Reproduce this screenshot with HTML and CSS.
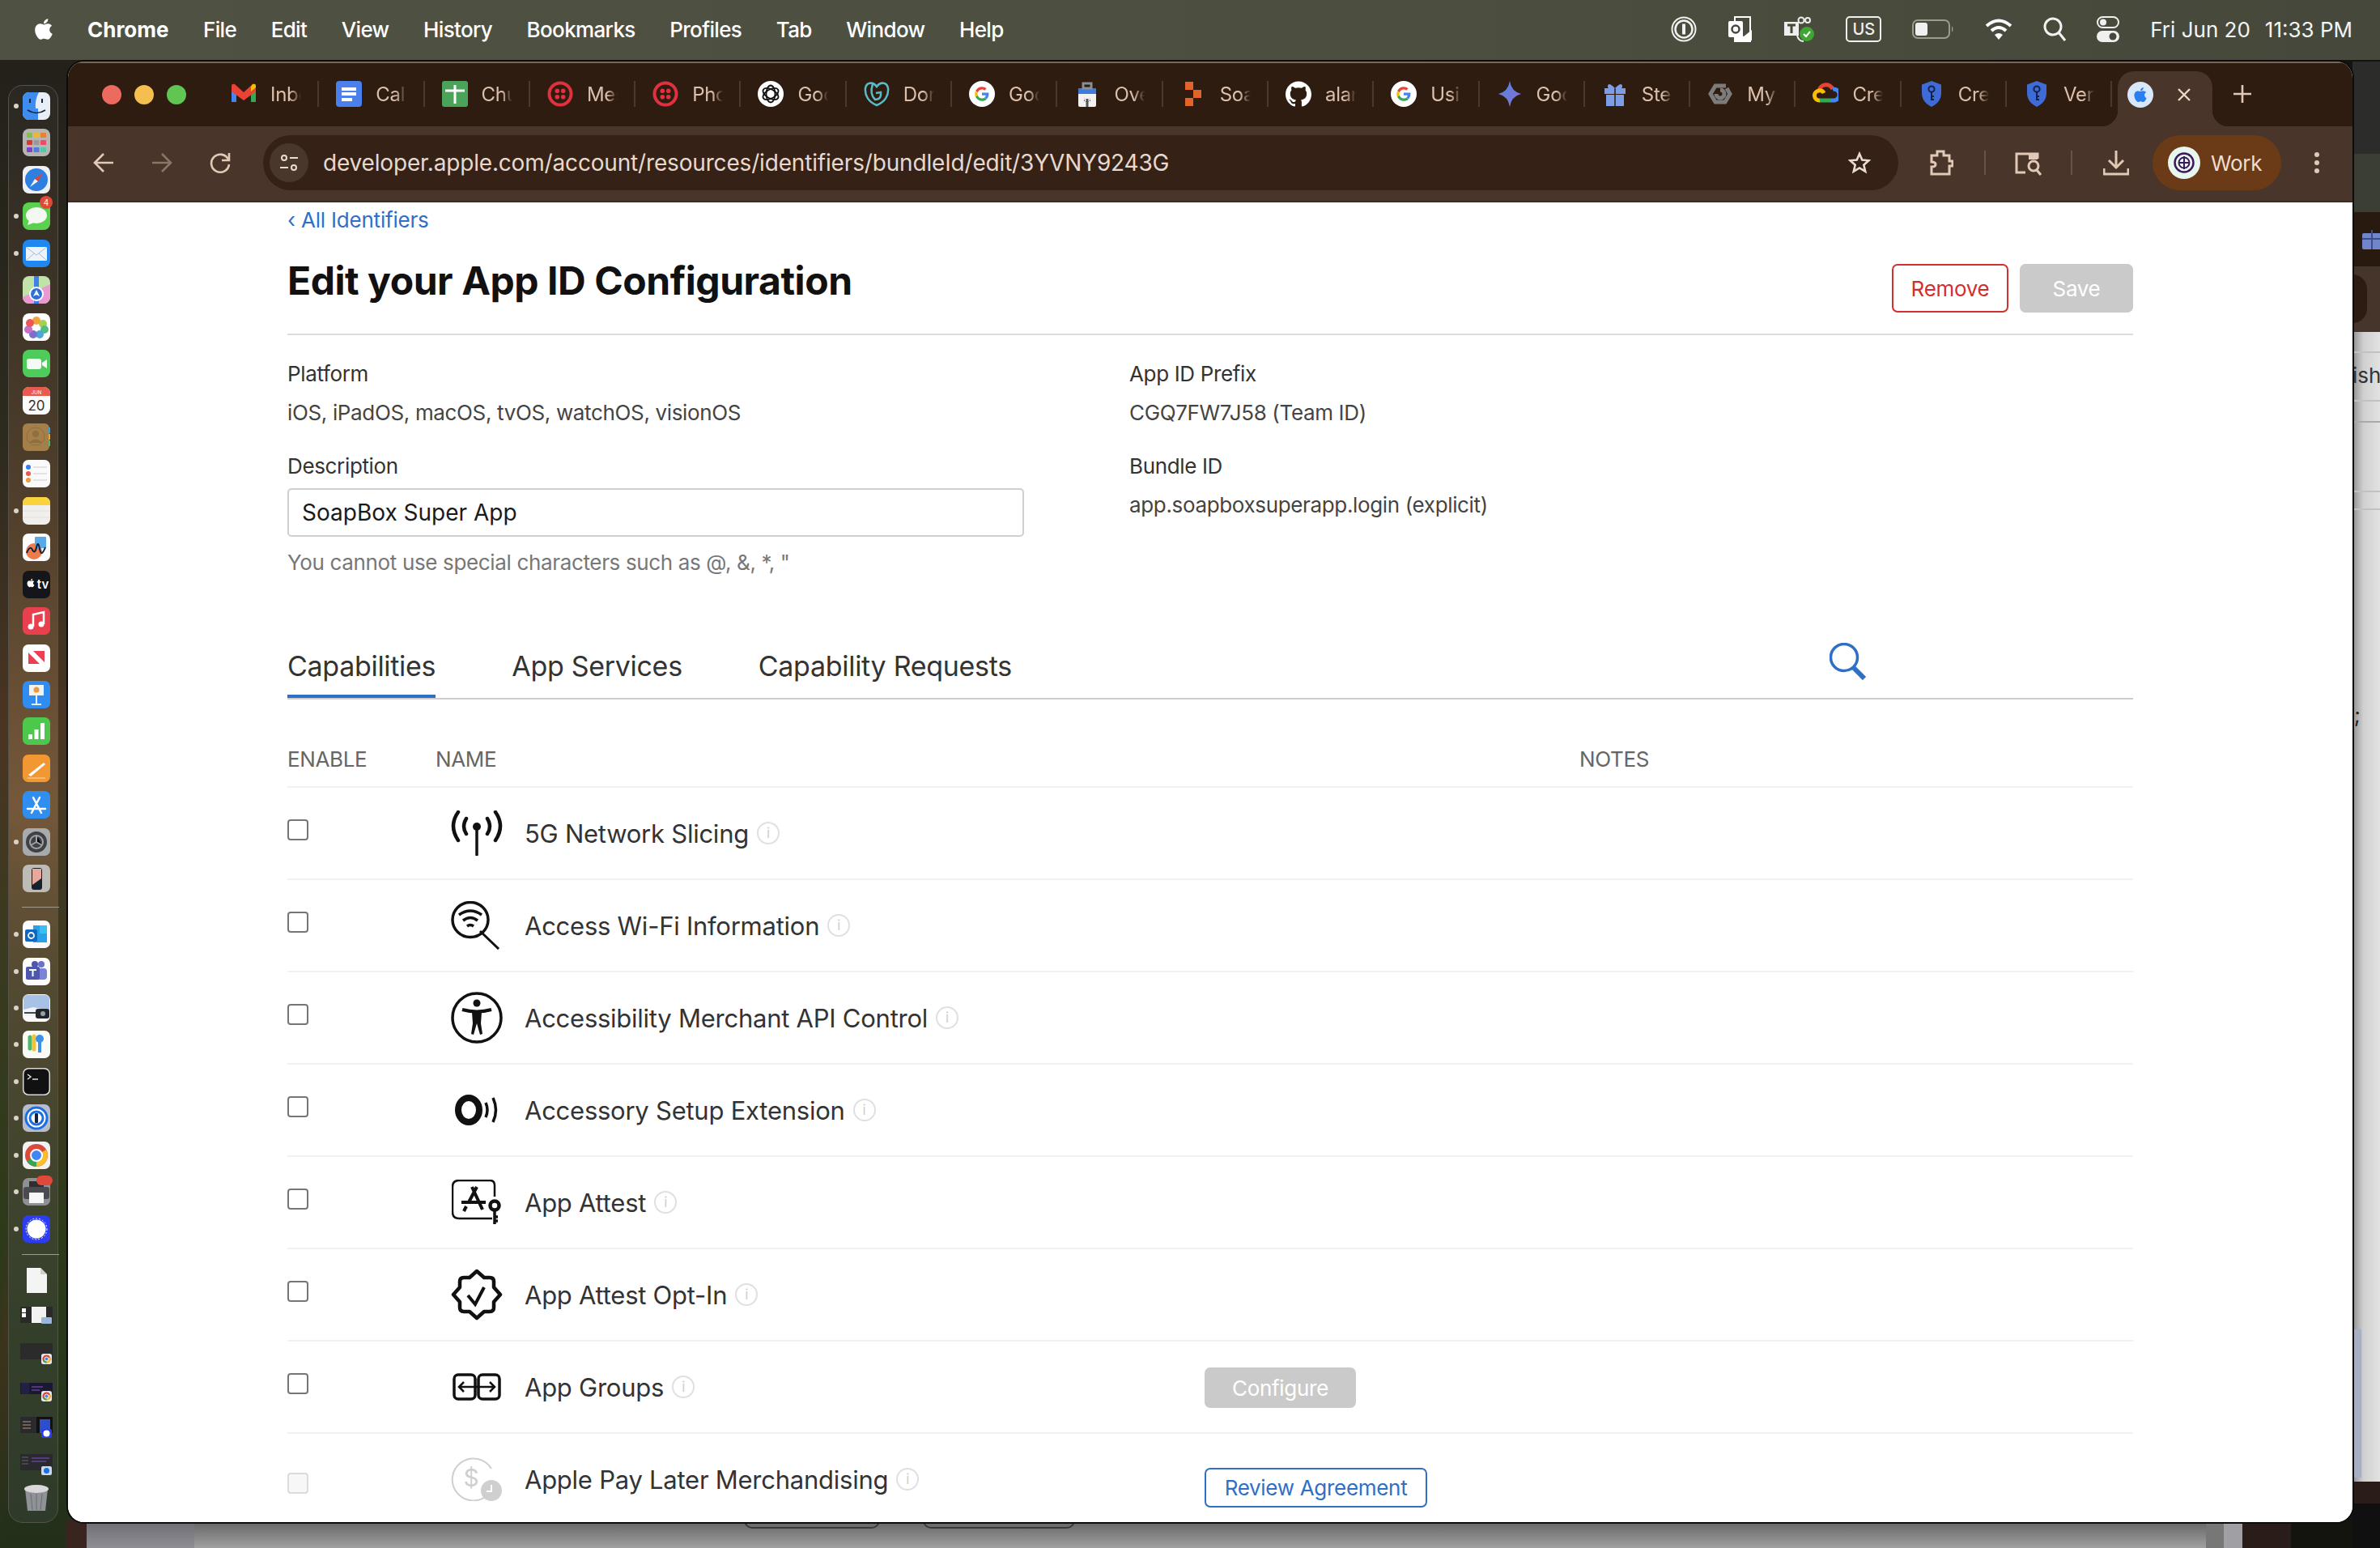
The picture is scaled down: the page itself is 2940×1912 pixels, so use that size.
FILE: index.html
```html
<!DOCTYPE html>
<html lang="en">
<head>
    <meta charset="UTF-8">
    <meta name="viewport" content="width=device-width, initial-scale=1.0">
    <title>Edit your App ID Configuration</title>
    <link rel="stylesheet" href="styles.css">
</head>
<body>
<svg class="defs" width="0" height="0">
    <symbol id="apple" viewBox="0 0 24 24"><path fill="currentColor" d="M17.05 20.28c-.98.95-2.05.8-3.08.35-1.09-.46-2.09-.48-3.24 0-1.44.62-2.2.44-3.06-.35C2.79 15.25 3.51 7.59 9.05 7.31c1.35.07 2.29.74 3.08.8 1.18-.24 2.31-.93 3.57-.84 1.51.12 2.65.72 3.4 1.8-3.12 1.87-2.38 5.98.48 7.13-.57 1.5-1.31 2.99-2.54 4.09l.01-.01zM12.03 7.25c-.15-2.23 1.66-4.07 3.74-4.25.29 2.58-2.34 4.5-3.74 4.25z"/></symbol>
    <symbol id="google" viewBox="0 0 32 32">
        <circle cx="16" cy="16" r="16" fill="#fff"/>
        <g transform="translate(6.4 6.4) scale(.8)">
            <path fill="#EA4335" d="M12 5.04c1.95 0 3.3.84 4.06 1.55l2.97-2.9C17.2 1.99 14.83 1 12 1 7.7 1 3.99 3.47 2.18 7.07l3.4 2.64C6.43 7.17 8.98 5.04 12 5.04z"/>
            <path fill="#4285F4" d="M22.56 12.25c0-.9-.08-1.57-.24-2.25H12v4.06h6.05c-.12 1-.78 2.51-2.25 3.53l3.3 2.55c2.06-1.9 3.46-4.7 3.46-7.89z"/>
            <path fill="#FBBC05" d="M5.59 14.29c-.22-.65-.35-1.34-.35-2.06s.13-1.41.34-2.06l-3.4-2.64C1.43 8.96 1 10.47 1 12.23s.43 3.27 1.18 4.7l3.41-2.64z"/>
            <path fill="#34A853" d="M12 23c2.97 0 5.46-.98 7.28-2.66l-3.3-2.55c-.89.62-2.08 1.05-3.98 1.05-3.02 0-5.57-2-6.48-4.75L2.12 16.7C3.93 20.32 7.66 23 12 23z"/>
        </g>
    </symbol>
    <symbol id="twilio" viewBox="0 0 32 32">
        <circle cx="16" cy="16" r="13.5" fill="none" stroke="#e0313f" stroke-width="4"/>
        <circle cx="12.3" cy="12.3" r="2.8" fill="#e0313f"/><circle cx="19.7" cy="12.3" r="2.8" fill="#e0313f"/>
        <circle cx="12.3" cy="19.7" r="2.8" fill="#e0313f"/><circle cx="19.7" cy="19.7" r="2.8" fill="#e0313f"/>
    </symbol>
    <symbol id="shield" viewBox="0 0 32 32">
        <path fill="#3f6bd6" d="M16 0l12 4.500V15c0 8-5 13.500-12 17C9 28.500 4 23 4 15V4.500z"/>
        <circle cx="16" cy="10" r="3.600" fill="none" stroke="#14224a" stroke-width="2"/>
        <path stroke="#14224a" stroke-width="2" fill="none" d="M16 13.500V24M16 19h3M16 23h3"/>
    </symbol>
    <symbol id="thumb-chrome" viewBox="0 0 14 14">
        <rect width="14" height="14" rx="3" fill="#e8e8e8"/>
        <circle cx="7" cy="7" r="5.500" fill="#d8453a"/>
        <path d="M7 7L2.200 9.800A5.500 5.500 0 0 0 7 12.500z" fill="#3aa757"/>
        <path d="M7 7v5.500a5.500 5.500 0 0 0 4.800-8z" fill="#f6c02c"/>
        <circle cx="7" cy="7" r="2.600" fill="#4285f4" stroke="#fff"/>
    </symbol>
</svg>

<div class="wallpaper"></div>

<!-- windows behind chrome -->
<div class="back-right">
    <div class="band band-dark"></div>
    <div class="band band-olive"></div>
    <div class="band band-strip">
        <svg width="36" height="24" viewBox="0 0 36 24"><rect x="12" y="4" width="24" height="20" rx="2" fill="#6f86cc"/><path d="M24 0v24M12 11h24" stroke="#3f4f86" stroke-width="2"/></svg>
    </div>
    <div class="band band-bar"><span class="band-pill"></span></div>
    <div class="back-sheet">
        <div class="sheet-row sheet-a"></div>
        <div class="sheet-row sheet-b">ish</div>
        <div class="sheet-row sheet-c"></div>
        <div class="sheet-row sheet-d"></div>
        <div class="sheet-row sheet-e"></div>
        <div class="sheet-semi">;</div>
        <div class="sheet-blue"></div>
    </div>
    <div class="band band-foot"></div>
</div>
<div class="back-bottom">
    <div class="back-frame"></div>
    <div class="back-side"></div>
    <div class="back-main">
        <span class="back-tab back-tab-a"></span>
        <span class="back-tab back-tab-b"></span>
    </div>
    <div class="back-edge"></div>
    <div class="back-frame back-frame-r"></div>
</div>

<header class="menubar">
    <svg class="menu-apple" width="34" height="36"><use href="#apple"/></svg>
    <nav class="menu-items">
        <span class="menu-app">Chrome</span>
        <span>File</span>
        <span>Edit</span>
        <span>View</span>
        <span>History</span>
        <span>Bookmarks</span>
        <span>Profiles</span>
        <span>Tab</span>
        <span>Window</span>
        <span>Help</span>
    </nav>
    <div class="status">
        <svg width="32" height="32" viewBox="0 0 32 32" fill="none" stroke="#f2f2f2"><circle cx="16" cy="16" r="14.500" stroke-width="2"/><circle cx="16" cy="16" r="10.500" stroke-width="2.500"/><path d="M16 9.500v13" stroke-width="4"/></svg>
        <svg width="32" height="32" viewBox="0 0 32 32"><path d="M9 1h19v30H9z" fill="none" stroke="#fff" stroke-width="2"/><path d="M10 19l10 6 10-8v13H10z" fill="#fff"/><rect x="1" y="6" width="18" height="20" rx="2" fill="#fff"/><circle cx="10" cy="16" r="4.500" fill="none" stroke="#45483a" stroke-width="2.500"/></svg>
        <svg width="38" height="32" viewBox="0 0 38 32"><rect x="0" y="7" width="18" height="17" fill="#eee"/><path d="M4 11h10M9 11v10" stroke="#45483a" stroke-width="3"/><circle cx="21" cy="5" r="3.500" fill="none" stroke="#eee" stroke-width="2"/><circle cx="29" cy="5" r="3" fill="none" stroke="#eee" stroke-width="2"/><path d="M16 24q2 7 8 7" fill="none" stroke="#eee" stroke-width="2"/><circle cx="28" cy="22" r="9" fill="#3fa535"/><path d="M24 22l3 3 5-6" fill="none" stroke="#fff" stroke-width="2"/></svg>
        <span class="kbd-us">US</span>
        <svg width="52" height="24" viewBox="0 0 52 24" fill="none"><rect x="1" y="1" width="45" height="22" rx="6" stroke="#9a9c90" stroke-width="2"/><rect x="4" y="4" width="15" height="16" rx="3" fill="#f0f0f0"/><path d="M49 8q3 4 0 8z" fill="#9a9c90"/></svg>
        <svg width="34" height="28" viewBox="0 0 34 28" fill="none" stroke="#fff" stroke-width="4"><path d="M2 10q15-13 30 0"/><path d="M8 16q9-8 18 0"/><path d="M17 27l-5-6q5-4 10 0z" fill="#fff" stroke="none"/></svg>
        <svg width="28" height="30" viewBox="0 0 28 30" fill="none" stroke="#f2f2f2" stroke-width="3"><circle cx="12" cy="12" r="10"/><path d="M19 19l8 10"/></svg>
        <svg width="28" height="32" viewBox="0 0 28 32"><rect x="1" y="1" width="26" height="13" rx="6.500" fill="none" stroke="#f0f0f0" stroke-width="2"/><circle cx="8" cy="7.500" r="4" fill="#f0f0f0"/><rect y="18" width="28" height="14" rx="7" fill="#f0f0f0"/><circle cx="20" cy="25" r="4.500" fill="#45483a"/></svg>
        <div class="clock"><span>Fri Jun 20</span><span>11:33 PM</span></div>
    </div>
</header>

<aside class="dock">
    <div class="dock-item running"><svg viewBox="0 0 34 34"><rect width="34" height="34" rx="8" fill="#e8eef6"/><path d="M0 8a8 8 0 0 1 8-8h12q-5 9-4 20h3v14H8a8 8 0 0 1-8-8z" fill="#3d8df0"/><path d="M9 8v5M24 8v5" stroke="#12233f" stroke-width="2"/><path d="M6 22q11 7 22 0" fill="none" stroke="#12233f" stroke-width="1.500"/></svg></div>
    <div class="dock-item"><svg viewBox="0 0 34 34"><rect width="34" height="34" rx="8" fill="#b7b5b2"/><rect x="5" y="5" width="7" height="6" rx="1" fill="#7fc04a"/><rect x="13.500" y="5" width="7" height="6" rx="1" fill="#eeb733"/><rect x="22" y="5" width="7" height="6" rx="1" fill="#e9822f"/><rect x="5" y="14" width="7" height="6" rx="1" fill="#d93a33"/><rect x="13.500" y="14" width="7" height="6" rx="1" fill="#999"/><rect x="22" y="14" width="7" height="6" rx="1" fill="#ee4b6a"/><rect x="5" y="23" width="7" height="6" rx="1" fill="#7f3fd3"/><rect x="13.500" y="23" width="7" height="6" rx="1" fill="#4f7de0"/><rect x="22" y="23" width="7" height="6" rx="1" fill="#4fc9a8"/></svg></div>
    <div class="dock-item"><svg viewBox="0 0 34 34"><rect width="34" height="34" rx="8" fill="#eef0f4"/><circle cx="17" cy="17" r="14" fill="#2e7fe2"/><path d="M25 8l-10 8 4 3z" fill="#e8412f"/><path d="M9 26l10-7-4-3z" fill="#f2f2f2"/></svg></div>
    <div class="dock-item running"><svg viewBox="0 0 34 34"><rect width="34" height="34" rx="8" fill="#5ad04e"/><ellipse cx="17" cy="16" rx="13" ry="10" fill="#f4f8f2"/><path d="M8 22l-2 6 8-3z" fill="#f4f8f2"/></svg><span class="dock-badge">4</span></div>
    <div class="dock-item running"><svg viewBox="0 0 34 34"><rect width="34" height="34" rx="8" fill="#1f87f0"/><rect x="4" y="9" width="26" height="17" rx="1" fill="#eef3fa"/><path d="M4 9l13 10L30 9M4 26l10-9M30 26L20 17" fill="none" stroke="#a8bbd3"/></svg></div>
    <div class="dock-item"><svg viewBox="0 0 34 34"><rect width="34" height="34" rx="8" fill="#bfe3a8"/><path d="M0 26l34-16v16a8 8 0 0 1-8 8H8a8 8 0 0 1-8-8z" fill="#e89ad0"/><path d="M14 0h6v34h-6z" fill="#3f80e8"/><circle cx="17" cy="22" r="8" fill="#2f6fd6" stroke="#fff" stroke-width="2"/><path d="M17 17l4 8-4-2-4 2z" fill="#fff"/></svg></div>
    <div class="dock-item"><svg viewBox="0 0 34 34"><rect width="34" height="34" rx="8" fill="#fff"/><circle cx="17" cy="9" r="5" fill="#f0a53a"/><circle cx="25" cy="13" r="5" fill="#a8cf4d"/><circle cx="27" cy="20" r="5" fill="#4fbf7f"/><circle cx="21" cy="26" r="5" fill="#4aa8d8"/><circle cx="13" cy="26" r="5" fill="#7b6fd0"/><circle cx="7" cy="20" r="5" fill="#c66fc4"/><circle cx="9" cy="12" r="5" fill="#e85a5a"/></svg></div>
    <div class="dock-item"><svg viewBox="0 0 34 34"><rect width="34" height="34" rx="8" fill="#4ecb5b"/><rect x="5" y="11" width="18" height="13" rx="3" fill="#f4faf4"/><path d="M24 16l6-4v11l-6-4z" fill="#f4faf4"/></svg></div>
    <div class="dock-item"><svg viewBox="0 0 34 34"><rect width="34" height="34" rx="8" fill="#fbfbfb"/><path d="M0 11V8a8 8 0 0 1 8-8h18a8 8 0 0 1 8 8v3z" fill="#e85a50"/><text x="17" y="8.500" class="dock-month">JUN</text><text x="17" y="29" class="dock-day">20</text></svg></div>
    <div class="dock-item"><svg viewBox="0 0 34 34"><rect width="33" height="34" rx="6" fill="#a57f4a"/><rect x="32" y="5" width="2" height="7" fill="#3a9ae0"/><rect x="32" y="13" width="2" height="7" fill="#e9a43a"/><rect x="32" y="21" width="2" height="7" fill="#5cb85c"/><circle cx="16" cy="16" r="11" fill="none" stroke="#8f6e3f"/><circle cx="16" cy="13" r="4" fill="#8f6e3f"/><path d="M8 24q8-9 16 0" fill="#8f6e3f"/></svg></div>
    <div class="dock-item"><svg viewBox="0 0 34 34"><rect width="34" height="34" rx="7" fill="#fafafa"/><circle cx="7" cy="9" r="3" fill="#2f80ed"/><circle cx="7" cy="17" r="3" fill="#e85a50"/><circle cx="7" cy="25" r="3" fill="#f0983a"/><path d="M13 9h17M13 17h17M13 25h17" stroke="#ccc"/></svg></div>
    <div class="dock-item running"><svg viewBox="0 0 34 34"><rect width="34" height="34" rx="7" fill="#f0efeb"/><path d="M0 10V7a7 7 0 0 1 7-7h20a7 7 0 0 1 7 7v3z" fill="#fad23c"/><path d="M0 17h34M0 25h34" stroke="#e2e0da"/></svg></div>
    <div class="dock-item"><svg viewBox="0 0 34 34"><rect width="34" height="34" rx="7" fill="#fcfcfc"/><circle cx="14" cy="22" r="10" fill="#ef7a4a"/><rect x="15" y="4" width="14" height="14" rx="1" fill="#5aa8e6"/><path d="M5 24q4-10 7-4t5-3 4 2 7-2" fill="none" stroke="#14223a" stroke-width="2"/></svg></div>
    <div class="dock-item"><svg viewBox="0 0 34 34"><rect width="34" height="34" rx="7" fill="#14161a"/><use href="#apple" x="3" y="8" width="14" height="14" color="#fff"/><text x="25" y="22" class="dock-tv">tv</text></svg></div>
    <div class="dock-item"><svg viewBox="0 0 34 34"><rect width="34" height="34" rx="7" fill="#e9404f"/><path d="M13 24V9l13-3v15" fill="none" stroke="#fff" stroke-width="2.500"/><circle cx="10" cy="24" r="3.500" fill="#fff"/><circle cx="23" cy="21" r="3.500" fill="#fff"/></svg></div>
    <div class="dock-item"><svg viewBox="0 0 34 34"><rect width="34" height="34" rx="7" fill="#fff"/><path d="M7 10l14 14H7zM13 8h14v14z" fill="#ea3f54"/></svg></div>
    <div class="dock-item"><svg viewBox="0 0 34 34"><rect width="34" height="34" rx="7" fill="#2f8cf0"/><rect x="8" y="5" width="18" height="13" fill="#f2f2f2"/><circle cx="17" cy="11" r="3.500" fill="#ea9a3a"/><path d="M17 18v11M11 29h12" stroke="#e8eef6" stroke-width="2"/></svg></div>
    <div class="dock-item"><svg viewBox="0 0 34 34"><rect width="34" height="34" rx="7" fill="#4dc84d"/><path d="M7 27v-6h5v6zM14.500 27V15h5v12zM22 27V7h5v20z" fill="#fff"/></svg></div>
    <div class="dock-item"><svg viewBox="0 0 34 34"><rect width="34" height="34" rx="7" fill="#f29832"/><path d="M7 25L26 10l2 2L10 27z" fill="#fff"/><path d="M6 29h22" stroke="#fdd9a8"/></svg></div>
    <div class="dock-item"><svg viewBox="0 0 34 34"><rect width="34" height="34" rx="7" fill="#2f8ff0"/><path d="M11 27L21 8M23 27L13 8M6 22h22" stroke="#fff" stroke-width="2.500" stroke-linecap="round"/></svg></div>
    <div class="dock-item running"><svg viewBox="0 0 34 34"><rect width="34" height="34" rx="7" fill="#a8abad"/><circle cx="17" cy="17" r="13" fill="#3f4144"/><circle cx="17" cy="17" r="8" fill="none" stroke="#9fa2a6" stroke-width="2"/><path d="M17 9v8l7 4M17 17l-7 4" stroke="#9fa2a6" stroke-width="2"/></svg></div>
    <div class="dock-item"><svg viewBox="0 0 34 34"><rect width="34" height="34" rx="7" fill="#bdbbb6"/><rect x="11" y="4" width="13" height="27" rx="3" fill="#15222e"/><path d="M12 5h11v12L12 25z" fill="#e8a79a"/></svg></div>
    <div class="dock-sep"></div>
    <div class="dock-item running"><svg viewBox="0 0 34 34"><rect width="34" height="34" rx="7" fill="#fcfcfc"/><rect x="13" y="6" width="17" height="21" fill="#2aa0e8"/><rect x="21" y="6" width="9" height="10" fill="#37c0f0"/><rect x="3" y="11" width="15" height="15" rx="2" fill="#1467c0"/><circle cx="10.500" cy="18.500" r="3.500" fill="none" stroke="#fff" stroke-width="1.800"/></svg></div>
    <div class="dock-item running"><svg viewBox="0 0 34 34"><rect width="34" height="34" rx="7" fill="#fcfcfc"/><circle cx="23" cy="8" r="4" fill="#6a72c8"/><rect x="18" y="13" width="12" height="14" rx="4" fill="#7b83d6"/><circle cx="15" cy="8" r="4" fill="#4e56ae"/><rect x="4" y="11" width="17" height="16" rx="2" fill="#4e56ae"/><path d="M8 15h9M12.500 15v8" stroke="#fff" stroke-width="2"/></svg></div>
    <div class="dock-item running"><svg viewBox="0 0 34 34"><rect width="34" height="34" rx="7" fill="#fafafa"/><rect x="1" y="1" width="32" height="26" rx="5" fill="#a8c2e6"/><path d="M1 19l12-3 20 4v7H1z" fill="#f2f2f4"/><path d="M2 23h18" stroke="#3a4858" stroke-width="2"/><rect x="16" y="18" width="17" height="12" rx="3" fill="#22262a"/><circle cx="25" cy="24" r="3" fill="#9aa0a6"/></svg></div>
    <div class="dock-item running"><svg viewBox="0 0 34 34"><rect width="34" height="34" rx="7" fill="#fbfbf6"/><path d="M9 8v14" stroke="#4db86a" stroke-width="5" stroke-linecap="round"/><path d="M14 7v16" stroke="#f2c33a" stroke-width="5" stroke-linecap="round"/><circle cx="21" cy="10" r="5" fill="#3a92e8"/><path d="M21 12v15" stroke="#3a92e8" stroke-width="4"/></svg></div>
    <div class="dock-item running"><svg viewBox="0 0 34 34"><rect width="34" height="34" rx="7" fill="#d8d8d8"/><rect x="1.500" y="1.500" width="31" height="31" rx="6" fill="#111"/><path d="M6 8l4 3-4 3M12 14h7" fill="none" stroke="#ddd" stroke-width="1.500"/></svg></div>
    <div class="dock-item running"><svg viewBox="0 0 34 34"><rect width="34" height="34" rx="7" fill="#b7bdcc"/><circle cx="17" cy="17" r="13" fill="#fff" stroke="#1d6fe0" stroke-width="3"/><circle cx="17" cy="17" r="8" fill="#fff" stroke="#1d6fe0" stroke-width="3"/><rect x="15" y="11" width="4" height="12" rx="1" fill="#10214a"/></svg></div>
    <div class="dock-item running"><svg viewBox="0 0 34 34"><rect width="34" height="34" rx="7" fill="#f2f2f2"/><circle cx="17" cy="17" r="14" fill="#d94a3d"/><path d="M17 17L5 24a14 14 0 0 0 12 7z" fill="#37a652"/><path d="M17 17v14a14 14 0 0 0 12-21z" fill="#f6c02c"/><circle cx="17" cy="17" r="7" fill="#4285f4" stroke="#fff" stroke-width="2"/></svg></div>
    <div class="dock-item running"><svg viewBox="0 0 34 34"><rect width="34" height="34" rx="7" fill="#8f9094"/><rect x="8" y="4" width="18" height="7" fill="#2e2e30"/><rect x="1" y="11" width="32" height="15" rx="3" fill="#4a4b4f"/><rect x="8" y="18" width="18" height="13" fill="#f6f6f6"/></svg><span class="dock-badge dock-badge-alt"></span></div>
    <div class="dock-item running"><svg viewBox="0 0 34 34"><rect width="34" height="34" rx="7" fill="#2c3cf0"/><circle cx="17" cy="17" r="11.500" fill="#fff"/><circle cx="17" cy="17" r="13" fill="none" stroke="#fff" stroke-dasharray="2 2"/></svg></div>
    <div class="dock-sep dock-sep-b"></div>
    <div class="dock-item"><svg viewBox="0 0 34 34"><path d="M5 2h17l8 8v23H5z" fill="#f4f4f4"/><path d="M22 2l8 8h-8z" fill="#cfcfcf"/></svg></div>
    <div class="dock-item dock-thumb dock-thumb-first"><svg viewBox="0 0 40 28"><rect width="40" height="20" y="0" fill="#2a2a2a"/><rect x="14" y="0" width="18" height="20" fill="#f2f2f2"/><rect x="2" y="2" width="5" height="5" fill="#fff"/><rect x="2" y="8" width="5" height="5" fill="#fff"/><rect x="26" y="13" width="13" height="8" rx="1" fill="#9ab6d8"/></svg></div>
    <div class="dock-item dock-thumb"><svg viewBox="0 0 40 28"><rect width="40" height="20" fill="#2b2b2b"/><use href="#thumb-chrome" x="26" y="13" width="13" height="13"/></svg></div>
    <div class="dock-item dock-thumb"><svg viewBox="0 0 40 28"><rect width="40" height="14" y="3" fill="#1b1832"/><rect x="1" y="3" width="10" height="14" fill="#241f44"/><path d="M14 8h14M14 12h10" stroke="#8a52c8"/><use href="#thumb-chrome" x="26" y="13" width="13" height="13"/></svg></div>
    <div class="dock-item dock-thumb"><svg viewBox="0 0 40 28"><rect width="20" height="20" fill="#2a2a2e"/><rect x="20" y="0" width="20" height="20" fill="#111"/><rect x="24" y="3" width="13" height="17" fill="#2c4fd0"/><path d="M3 6h10M3 10h10M3 14h10" stroke="#b59a78"/><rect x="26" y="15" width="13" height="11" rx="2" fill="#2c3cf0"/><circle cx="32.500" cy="20.500" r="4" fill="#fff"/></svg></div>
    <div class="dock-item dock-thumb"><svg viewBox="0 0 40 28"><rect width="40" height="20" fill="#2a2a2e"/><path d="M14 5h22M14 9h18" stroke="#7a52c8"/><path d="M2 4h8M2 8h8M2 12h8" stroke="#666"/><rect x="26" y="15" width="13" height="11" rx="2" fill="#cfd8f0"/><circle cx="32.500" cy="20.500" r="3.500" fill="#1d6fe0"/></svg></div>
    <div class="dock-item dock-trash"><svg viewBox="0 0 34 34"><path d="M3 6h28l-3 27H6z" fill="#8f9296"/><ellipse cx="17" cy="6" rx="15" ry="5" fill="#d8d8d8"/><path d="M10 12l2 20M17 12v20M24 12l-2 20" stroke="#6a6d71"/></svg></div>
</aside>

<main class="window">
    <div class="tabstrip">
        <div class="traffic">
            <span class="light light-red"></span>
            <span class="light light-yellow"></span>
            <span class="light light-green"></span>
        </div>
        <div class="tab"><svg class="favicon" viewBox="0 0 32 32"><path d="M1 8v18h6V13z" fill="#4285f4"/><path d="M25 13v13h6V8z" fill="#34a853"/><path d="M1 6v7l15 11 15-11V6q0-3-4-2L16 14 5 4Q1 3 1 6z" fill="#ea4335"/><path d="M25 7v6l6-5V6q0-3-4-2z" fill="#fbbc04"/></svg><span class="tab-title">Inbo</span></div>
        <div class="tab"><svg class="favicon" viewBox="0 0 32 32"><rect width="32" height="32" rx="4" fill="#4a80ec"/><path d="M7 8h18v4H7zM7 14h18v4H7zM7 21h13v4H7z" fill="#fff"/></svg><span class="tab-title">Cali</span></div>
        <div class="tab"><svg class="favicon" viewBox="0 0 32 32"><rect width="32" height="32" rx="3" fill="#4ba35a"/><path d="M4 12h24M16 5v23" stroke="#fff" stroke-width="3"/></svg><span class="tab-title">Chu</span></div>
        <div class="tab"><svg class="favicon"><use href="#twilio"/></svg><span class="tab-title">Mes</span></div>
        <div class="tab"><svg class="favicon"><use href="#twilio"/></svg><span class="tab-title">Pho</span></div>
        <div class="tab"><svg class="favicon" viewBox="0 0 32 32"><circle cx="16" cy="16" r="16" fill="#fff"/><g fill="none" stroke="#111" stroke-width="1.800"><ellipse cx="16" cy="16" rx="5.500" ry="10.500"/><ellipse cx="16" cy="16" rx="5.500" ry="10.500" transform="rotate(60 16 16)"/><ellipse cx="16" cy="16" rx="5.500" ry="10.500" transform="rotate(120 16 16)"/></g></svg><span class="tab-title">Goo</span></div>
        <div class="tab"><svg class="favicon" viewBox="0 0 32 32" fill="none" stroke="#58bcc8" stroke-width="2.500"><path d="M16 30C6 26 1 18 2 9c1-7 9-9 14-2 5-7 13-5 14 2 1 9-4 17-14 21z"/><path d="M11 4q-4 12 3 19 8 0 7-9l-6 1"/></svg><span class="tab-title">Dor</span></div>
        <div class="tab"><svg class="favicon"><use href="#google"/></svg><span class="tab-title">Goo</span></div>
        <div class="tab"><svg class="favicon" viewBox="0 0 32 32"><rect x="5" y="9" width="22" height="23" rx="2" fill="#f2f2f2"/><rect x="5" y="9" width="22" height="7" fill="#3c7be0"/><path d="M11 3h10v6H11z" fill="none" stroke="#8a8f96" stroke-width="3"/><path d="M12 20q0 6 4 6t4-6v5h-8z" fill="#555"/><path d="M16 22v10" stroke="#555" stroke-width="3"/></svg><span class="tab-title">Ove</span></div>
        <div class="tab"><svg class="favicon" viewBox="0 0 32 32"><path d="M6 1h10v10H6zM16 11h10v10H16zM6 21h10v10H6z" fill="#e2642a"/></svg><span class="tab-title">Soa</span></div>
        <div class="tab"><svg class="favicon" viewBox="0 0 24 24"><path fill="#fff" d="M12 .297c-6.630 0-12 5.373-12 12 0 5.303 3.438 9.800 8.205 11.385.6.113.82-.258.82-.577 0-.285-.01-1.040-.015-2.040-3.338.724-4.042-1.610-4.042-1.610C4.422 18.070 3.633 17.700 3.633 17.700c-1.087-.744.084-.729.084-.729 1.205.084 1.838 1.236 1.838 1.236 1.070 1.835 2.809 1.305 3.495.998.108-.776.417-1.305.76-1.605-2.665-.3-5.466-1.332-5.466-5.930 0-1.310.465-2.380 1.235-3.220-.135-.303-.54-1.523.105-3.176 0 0 1.005-.322 3.300 1.230.96-.267 1.980-.399 3-.405 1.020.006 2.040.138 3 .405 2.280-1.552 3.285-1.230 3.285-1.230.645 1.653.24 2.873.12 3.176.765.840 1.230 1.910 1.230 3.220 0 4.610-2.805 5.625-5.475 5.920.42.36.81 1.096.81 2.220 0 1.606-.015 2.896-.015 3.286 0 .315.21.69.825.57C20.565 22.092 24 17.592 24 12.297c0-6.627-5.373-12-12-12"/></svg><span class="tab-title">alan</span></div>
        <div class="tab"><svg class="favicon"><use href="#google"/></svg><span class="tab-title">Usi</span></div>
        <div class="tab"><svg class="favicon" viewBox="0 0 32 32"><defs><linearGradient id="gem" x1="0" y1="0" x2="1" y2="1"><stop offset="0" stop-color="#4f86e8"/><stop offset="1" stop-color="#8a6ec8"/></linearGradient></defs><path d="M16 0q2 13 14 16-12 3-14 16-2-13-14-16 12-3 14-16z" fill="url(#gem)"/></svg><span class="tab-title">Goo</span></div>
        <div class="tab"><svg class="favicon" viewBox="0 0 32 32"><path d="M3 9h26v7H3zM5 17h22v14H5z" fill="#7d9de6"/><path d="M16 9v22" stroke="#2f1c10" stroke-width="1.500"/><path d="M16 9Q8 1 7 6t9 3zM16 9q8-8 9-3t-9 3z" fill="#7d9de6"/></svg><span class="tab-title">Ste</span></div>
        <div class="tab"><svg class="favicon" viewBox="0 0 32 32" fill="none" stroke="#7c7c7c" stroke-width="5"><path d="M23 6H10L4 16l6 10h12l6-10-4-7"/><path d="M11 16a5 5 0 1 0 5-5"/></svg><span class="tab-title">My</span></div>
        <div class="tab"><svg class="favicon" viewBox="0 0 32 32" fill="none" stroke-width="5"><path d="M8 12a9 9 0 0 1 17-2" stroke="#ea4335"/><path d="M25 10a7 7 0 0 1 2 14h-5" stroke="#4285f4"/><path d="M22 24H9" stroke="#34a853"/><path d="M9 24a6 6 0 0 1-1-12q4-1 6 3" stroke="#fbbc05"/></svg><span class="tab-title">Cre</span></div>
        <div class="tab"><svg class="favicon"><use href="#shield"/></svg><span class="tab-title">Cre</span></div>
        <div class="tab"><svg class="favicon"><use href="#shield"/></svg><span class="tab-title">Ver</span></div>
        <div class="tab-active">
            <span class="tab-apple"><svg width="24" height="24" color="#2a7ff0"><use href="#apple"/></svg></span>
            <svg class="tab-close" width="16" height="16" viewBox="0 0 16 16" stroke="#ecd9ca" stroke-width="2.400"><path d="M1 1l14 14M15 1L1 15"/></svg>
        </div>
        <svg class="tab-new" width="22" height="22" viewBox="0 0 22 22" stroke="#e2c9b6" stroke-width="2.600"><path d="M11 0v22M0 11h22"/></svg>
    </div>

    <div class="toolbar">
        <button class="tool"><svg width="26" height="26" viewBox="0 0 26 26" fill="none" stroke="#e2c9b6" stroke-width="2.600"><path d="M25 13H3M13 2L2 13l11 11"/></svg></button>
        <button class="tool"><svg width="26" height="26" viewBox="0 0 26 26" fill="none" stroke="#8c7565" stroke-width="2.600"><path d="M1 13h22M13 2l11 11-11 11"/></svg></button>
        <button class="tool"><svg width="26" height="28" viewBox="0 0 26 28" fill="none" stroke="#e2c9b6" stroke-width="2.600"><path d="M23 10a11 11 0 1 0 1 6"/><path d="M24 2v9h-9" stroke-linejoin="miter"/></svg></button>
        <div class="omnibox">
            <span class="tune"><svg width="24" height="24" viewBox="0 0 24 24" fill="none" stroke="#e8dcd2" stroke-width="2"><circle cx="6" cy="6" r="3"/><path d="M13 6h10M1 18h10"/><circle cx="18" cy="18" r="3"/></svg></span>
            <span class="url">developer.apple.com/account/resources/identifiers/bundleId/edit/3YVNY9243G</span>
            <svg class="star" width="28" height="28" viewBox="0 0 28 28" fill="none" stroke="#e8dcd2" stroke-width="2.600"><path d="M14 3l3.300 7.600 8.200.7-6.200 5.400 1.900 8L14 20.400 6.800 24.700l1.900-8-6.200-5.400 8.200-.7z"/></svg>
        </div>
        <button class="tool tool-ext"><svg width="30" height="32" viewBox="0 0 30 32" fill="none" stroke="#e2c9b6" stroke-width="3"><path d="M3 7h7V2h8v5h7v7h4v6h-4v10H3v-9q5 0 5-3t-5-3z"/></svg></button>
        <span class="tool-sep"></span>
        <button class="tool tool-small"><svg width="36" height="32" viewBox="0 0 36 32" fill="none" stroke="#e2c9b6" stroke-width="3"><path d="M14 28H3V5h26v6"/><path d="M18 4h11v8H18z" fill="#e2c9b6" stroke="none"/><circle cx="24" cy="20" r="6"/><path d="M28 25l5 6"/></svg></button>
        <span class="tool-sep tool-sep-b"></span>
        <button class="tool tool-small"><svg width="32" height="32" viewBox="0 0 32 32" fill="none" stroke="#e2c9b6" stroke-width="3"><path d="M16 1v21M7 13l9 9 9-9M1 23v7h30v-7"/></svg></button>
        <div class="profile">
            <span class="avatar"><svg width="26" height="26" viewBox="0 0 26 26" fill="none" stroke="#3a1a5c" stroke-width="2.500"><circle cx="13" cy="13" r="11.500"/><circle cx="13" cy="13" r="6.500" stroke-width="2"/><path d="M13 5v16M7 13h12" stroke-width="2"/></svg></span>
            <span class="profile-name">Work</span>
        </div>
        <button class="tool tool-small tool-menu"><svg width="8" height="28" viewBox="0 0 8 28" fill="#e2c9b6"><circle cx="4" cy="4" r="3"/><circle cx="4" cy="14" r="3"/><circle cx="4" cy="24" r="3"/></svg></button>
    </div>

    <div class="page">
        <a class="crumb" href="#">&#8249; All Identifiers</a>
        <div class="page-head">
            <h1>Edit your App ID Configuration</h1>
            <div class="head-actions">
                <button class="btn btn-remove">Remove</button>
                <button class="btn btn-save">Save</button>
            </div>
        </div>

        <div class="meta">
            <div class="meta-col">
                <div class="meta-label">Platform</div>
                <div class="meta-value">iOS, iPadOS, macOS, tvOS, watchOS, visionOS</div>
                <div class="meta-label meta-next">Description</div>
                <input class="desc-input" type="text" value="SoapBox Super App">
                <div class="meta-hint">You cannot use special characters such as @, &amp;, *, "</div>
            </div>
            <div class="meta-col">
                <div class="meta-label">App ID Prefix</div>
                <div class="meta-value">CGQ7FW7J58 (Team ID)</div>
                <div class="meta-label meta-next">Bundle ID</div>
                <div class="meta-value">app.soapboxsuperapp.login (explicit)</div>
            </div>
        </div>

        <div class="tabs">
            <span class="page-tab page-tab-on">Capabilities</span>
            <span class="page-tab">App Services</span>
            <span class="page-tab">Capability Requests</span>
            <svg class="tabs-search" width="46" height="46" viewBox="0 0 46 46" fill="none" stroke="#2f6fc6"><circle cx="18" cy="18" r="16.500" stroke-width="3.500"/><path d="M29 30l14 14" stroke-width="6"/></svg>
        </div>

        <div class="cap-row cap-head">
            <span>ENABLE</span>
            <span>NAME</span>
            <span></span>
            <span>NOTES</span>
        </div>

        <div class="cap-row">
            <input class="cap-check" type="checkbox">
            <div class="cap-name">
                <span class="cap-icon"><svg width="64" height="56" viewBox="0 0 64 56" fill="none" stroke="#111" stroke-linecap="round"><path d="M9 2Q-3 19 9 37" stroke-width="4.500"/><path d="M55 2q12 17 0 35" stroke-width="4.500"/><path d="M19 10q-6 10 0 19M45 10q6 10 0 19" stroke-width="4.500"/><path d="M32 24v31" stroke-width="3.500"/><circle cx="32" cy="20" r="5" fill="#111" stroke="none"/></svg></span>
                <span>5G Network Slicing</span><span class="info">i</span>
            </div>
        </div>
        <div class="cap-row">
            <input class="cap-check" type="checkbox">
            <div class="cap-name">
                <span class="cap-icon"><svg width="64" height="60" viewBox="0 0 64 60" fill="none" stroke="#111"><ellipse cx="24" cy="23" rx="22" ry="21.500" stroke-width="3.500"/><path d="M36 37l23 22" stroke-width="3"/><path d="M10 17q14-10 28 0M15 24q9-7 18 0M20 31q4-3 8 0" stroke-width="3.500"/></svg></span>
                <span>Access Wi-Fi Information</span><span class="info">i</span>
            </div>
        </div>
        <div class="cap-row">
            <input class="cap-check" type="checkbox">
            <div class="cap-name">
                <span class="cap-icon"><svg width="64" height="64" viewBox="0 0 64 64" fill="none" stroke="#111"><circle cx="32" cy="32" r="30" stroke-width="3.500"/><circle cx="32" cy="14" r="4.500" fill="#111" stroke="none"/><path d="M14 22q18 5 36 0" stroke-width="4"/><path d="M26 25h12l-1 14 2 13-3 1-4-14-4 14-3-1 2-13z" fill="#111" stroke="none"/></svg></span>
                <span>Accessibility Merchant API Control</span><span class="info">i</span>
            </div>
        </div>
        <div class="cap-row">
            <input class="cap-check" type="checkbox">
            <div class="cap-name">
                <span class="cap-icon"><svg width="58" height="38" viewBox="0 0 58 38" fill="none" stroke="#111"><ellipse cx="19" cy="19" rx="13" ry="15" stroke-width="8"/><path d="M40 10q4 9 0 18" stroke-width="3.500"/><path d="M49 4q7 15 0 30" stroke-width="3.500"/></svg></span>
                <span>Accessory Setup Extension</span><span class="info">i</span>
            </div>
        </div>
        <div class="cap-row">
            <input class="cap-check" type="checkbox">
            <div class="cap-name">
                <span class="cap-icon"><svg width="62" height="56" viewBox="0 0 62 56" fill="none" stroke="#111"><path d="M50 48H9q-8 0-8-8V9q0-8 8-8h38q6 0 6 6v14" stroke-width="2.500"/><path d="M25 9l13 28M31 9L21 28M12 28h30M18 33l-3 6" stroke-width="4"/><circle cx="53" cy="32" r="5.500" stroke-width="4.500"/><path d="M53 37v18M53 46h4M53 51h4" stroke-width="3.500"/></svg></span>
                <span>App Attest</span><span class="info">i</span>
            </div>
        </div>
        <div class="cap-row">
            <input class="cap-check" type="checkbox">
            <div class="cap-name">
                <span class="cap-icon"><svg width="64" height="64" viewBox="0 0 64 64" fill="none" stroke="#111"><path d="M32 3l9 8h7q5 0 5 5v7l8 9-8 9v7q0 5-5 5h-7l-9 8-9-8h-7q-5 0-5-5v-7l-8-9 8-9v-7q0-5 5-5h7z" stroke-width="4.500" stroke-linejoin="round"/><path d="M21 33l9 11 11-21" stroke-width="4"/></svg></span>
                <span>App Attest Opt-In</span><span class="info">i</span>
            </div>
        </div>
        <div class="cap-row">
            <input class="cap-check" type="checkbox">
            <div class="cap-name">
                <span class="cap-icon"><svg width="60" height="34" viewBox="0 0 60 34" fill="none" stroke="#111" stroke-width="3.500"><rect x="2" y="2" width="26" height="30" rx="5"/><rect x="32" y="2" width="26" height="30" rx="5"/><path d="M8 17h44M14 11l-6 6 6 6M46 11l6 6-6 6" stroke-width="2.500"/></svg></span>
                <span>App Groups</span><span class="info">i</span>
            </div>
            <button class="btn btn-config">Configure</button>
        </div>
        <div class="cap-row">
            <input class="cap-check cap-check-off" type="checkbox" disabled>
            <div class="cap-name">
                <span class="cap-icon"><svg width="64" height="54" viewBox="0 0 64 54" fill="none" stroke="#cfcfcf"><path d="M46 46A26 26 0 1 1 50 14" stroke-width="2"/><text x="25" y="36" class="pay-dollar">$</text><circle cx="50" cy="41" r="13" fill="#cfcfcf" stroke="none"/><path d="M50 34v8h-6" stroke="#fff" stroke-width="2"/></svg></span>
                <span>Apple Pay Later Merchandising</span><span class="info">i</span>
            </div>
            <button class="btn btn-review">Review Agreement</button>
        </div>
    </div>
</main>
</body>
</html>
```

FILE: styles.css
```css
* {
    box-sizing: border-box;
}

html, body {
    margin: 0;
    padding: 0;
}

body {
    position: relative;
    width: 2940px;
    height: 1912px;
    overflow: hidden;
    font-family: Inter, "Liberation Sans", sans-serif;
    background-color: #14140f;
}

.defs {
    position: absolute;
}

.wallpaper {
    position: absolute;
    left: 0;
    top: 74px;
    width: 110px;
    bottom: 0;
    background:
        linear-gradient(100deg, transparent 60%, rgba(120, 40, 30, 0.25) 66%, transparent 75%),
        linear-gradient(180deg, #23211a 0%, #2d2a1e 25%, #4a3522 45%, #3a3a20 60%, #2c3a1a 80%, #22301a 100%);
}

/* ---- menu bar ---- */
.menubar {
    position: relative;
    display: flex;
    align-items: center;
    height: 74px;
    padding: 0 34px 2px 37px;
    background: linear-gradient(90deg, #4f5243, #4c4f3f 60%, #45483a);
    color: #fff;
    font-size: 26px;
    font-weight: 500;
}

.menu-apple {
    color: #fff;
}

.menu-items {
    display: flex;
    gap: 42.5px;
    margin-left: 37px;
    letter-spacing: -0.65px;
}

.menu-app {
    font-weight: 700;
    letter-spacing: 0;
}

.status {
    display: flex;
    align-items: center;
    gap: 38px;
    margin-left: auto;
}

.kbd-us {
    width: 44px;
    height: 32px;
    border: 2px solid #f0f0f0;
    border-radius: 5px;
    font-size: 20px;
    line-height: 28px;
    text-align: center;
    color: #f0f0f0;
}

.clock {
    display: flex;
    gap: 18px;
    font-weight: 400;
    color: #f4f4f4;
}

/* ---- dock ---- */
.dock {
    position: absolute;
    left: 10px;
    top: 105px;
    width: 62px;
    height: 1776px;
    display: flex;
    flex-direction: column;
    gap: 11.45px;
    padding: 8px 0 0 17px;
    border: 1px solid #55524a;
    border-radius: 18px;
    background: linear-gradient(180deg, #2a2822 0%, #52402c 30%, #75583a 50%, #544a32 62%, #35402b 85%, #2f3b2a 100%);
}

.dock-item {
    position: relative;
    flex: none;
    width: 34px;
    height: 34px;
}

.dock-item svg {
    display: block;
    width: 34px;
    height: 34px;
}

.dock-item.running::before {
    content: "";
    position: absolute;
    left: -11px;
    top: 14px;
    width: 6px;
    height: 6px;
    border-radius: 50%;
    background-color: #d8d3c6;
}

.dock-badge {
    position: absolute;
    right: -3px;
    top: -8px;
    width: 16px;
    height: 16px;
    border-radius: 50%;
    background-color: #e0483a;
    color: #fff;
    font-size: 10px;
    line-height: 16px;
    text-align: center;
}

.dock-badge-alt {
    width: 20px;
    height: 12px;
    top: -3px;
    border-radius: 6px;
}

.dock-sep {
    flex: none;
    width: 46px;
    height: 1px;
    margin: 6px 0 5px -1px;
    background-color: #a09a8c;
}

.dock-sep-b {
    margin: 3px 0 3px -1px;
}

.dock-thumb {
    width: 40px;
    margin-left: -3px;
}

.dock-thumb svg {
    width: 40px;
    height: 28px;
}

.dock-thumb-first {
    margin-top: 4px;
}

.dock-trash {
    margin-top: -8px;
}

.dock-month {
    font-size: 6px;
    fill: #fff;
    text-anchor: middle;
    font-family: Inter, sans-serif;
}

.dock-day {
    font-size: 17px;
    fill: #333;
    text-anchor: middle;
    font-family: Inter, sans-serif;
}

.dock-tv {
    font-size: 15px;
    font-weight: 600;
    fill: #fff;
    text-anchor: middle;
    font-family: Inter, sans-serif;
}

/* ---- what shows round the window ---- */
.back-right {
    position: absolute;
    left: 2906px;
    top: 76px;
    right: 0;
    bottom: 0;
    display: flex;
    flex-direction: column;
    background-color: #101010;
    overflow: hidden;
}

.band {
    flex: none;
}

.band-dark {
    height: 114px;
    background-color: #2c2c2a;
}

.band-olive {
    height: 72px;
    background-color: #3b3f33;
}

.band-strip {
    height: 67px;
    padding-top: 22px;
    background-color: #291a10;
}

.band-strip svg {
    display: block;
}

.band-bar {
    height: 81px;
    padding-top: 10px;
    background-color: #45352a;
}

.band-pill {
    display: block;
    width: 18px;
    height: 60px;
    border-radius: 0 30px 30px 0;
    background-color: #2c1c12;
}

.back-sheet {
    flex: none;
    display: flex;
    flex-direction: column;
    height: 1420px;
    background: linear-gradient(90deg, #8f8f8f, #d0d0d0 40%, #e2e2e2);
    font-size: 26px;
    color: #222;
}

.sheet-row {
    flex: none;
    border-bottom: 2px solid #c2c2c2;
}

.sheet-a {
    height: 26px;
}

.sheet-b {
    height: 60px;
    line-height: 56px;
    white-space: nowrap;
    text-align: right;
    padding-right: 3px;
    color: #333;
}

.sheet-c {
    height: 26px;
    border-bottom-color: #a8a8ae;
}

.sheet-d {
    height: 86px;
}

.sheet-e {
    height: 22px;
}

.sheet-semi {
    flex: none;
    margin-top: 238px;
    line-height: 30px;
    padding-left: 2px;
}

.sheet-blue {
    width: 11px;
    height: 183px;
    margin-top: auto;
    margin-bottom: 5px;
    background-color: #a9afc2;
}

.band-foot {
    height: 27px;
    background-color: #2a1c18;
}

.back-bottom {
    position: absolute;
    left: 82px;
    right: 110px;
    top: 1878px;
    bottom: 0;
    display: flex;
}

.back-frame {
    flex: none;
    width: 25px;
    background-color: #3a2420;
}

.back-frame-r {
    width: 60px;
    background-color: #2a1c18;
}

.back-side {
    flex: none;
    width: 133px;
    background: linear-gradient(180deg, #6c6c72, #8e8e94);
}

.back-main {
    position: relative;
    flex: 1;
    background: linear-gradient(180deg, #626262, #a0a0a0);
}

.back-tab {
    position: absolute;
    top: 0;
    height: 10px;
    border: 2px solid #3a3a3a;
    border-top: none;
    border-radius: 0 0 12px 12px;
}

.back-tab-a {
    left: 679px;
    width: 168px;
}

.back-tab-b {
    left: 900px;
    width: 188px;
}

.back-edge {
    flex: none;
    width: 45px;
    background: linear-gradient(90deg, #777 0, #777 50%, #a0a0a4 50%);
}

/* ---- chrome window ---- */
.window {
    position: absolute;
    left: 84px;
    top: 76px;
    width: 2822px;
    height: 1804px;
    display: flex;
    flex-direction: column;
    overflow: hidden;
    border-radius: 20px;
    background-color: #fff;
    box-shadow: 0 0 0 2px #0c0c0c;
}

.tabstrip {
    flex: none;
    display: flex;
    align-items: center;
    height: 80px;
    padding-left: 180px;
    background-color: #2f1c10;
    box-shadow: inset 0 2px 0 #75675c;
}

.traffic {
    position: absolute;
    left: 42px;
    top: 29px;
    display: flex;
    gap: 16px;
}

.light {
    width: 24px;
    height: 24px;
    border-radius: 50%;
}

.light-red {
    background-color: #ec6a5e;
}

.light-yellow {
    background-color: #f4bf4f;
}

.light-green {
    background-color: #61c554;
}

.tab {
    flex: none;
    display: flex;
    align-items: center;
    gap: 17px;
    width: 130.3px;
    height: 32px;
    padding-left: 21px;
    border-right: 2px solid #4b392c;
}

.favicon {
    flex: none;
    display: block;
    width: 32px;
    height: 32px;
}

.tab-title {
    width: 38px;
    overflow: hidden;
    white-space: nowrap;
    font-size: 24px;
    letter-spacing: -0.3px;
    color: #dcc0ac;
    -webkit-mask-image: linear-gradient(90deg, #000 65%, transparent);
    mask-image: linear-gradient(90deg, #000 65%, transparent);
}

.tab-active {
    position: relative;
    flex: none;
    display: flex;
    align-items: center;
    align-self: flex-end;
    width: 117px;
    height: 68px;
    margin-left: 7px;
    padding: 0 0 10px 12px;
    border-radius: 20px 20px 0 0;
    background-color: #49352a;
}

.tab-active::before,
.tab-active::after {
    content: "";
    position: absolute;
    bottom: 0;
    width: 20px;
    height: 20px;
}

.tab-active::before {
    left: -20px;
    background: radial-gradient(circle at 0 0, #2f1c10 20px, #49352a 20.5px);
}

.tab-active::after {
    right: -20px;
    background: radial-gradient(circle at 100% 0, #2f1c10 20px, #49352a 20.5px);
}

.tab-apple {
    display: flex;
    align-items: center;
    justify-content: center;
    width: 32px;
    height: 32px;
    border-radius: 50%;
    background-color: #d9e7fb;
}

.tab-close {
    margin-left: 30px;
}

.tab-new {
    margin-left: 26px;
}

.toolbar {
    flex: none;
    display: flex;
    align-items: center;
    height: 94px;
    padding: 0 0 2px 8px;
    background-color: #49352a;
    border-bottom: 2px solid #3e2c22;
}

.tool {
    flex: none;
    display: flex;
    align-items: center;
    justify-content: center;
    width: 72px;
    height: 68px;
    padding: 0;
    border: none;
    background: none;
}

.tool-small {
    width: 60px;
}

.omnibox {
    flex: none;
    display: flex;
    align-items: center;
    width: 2020px;
    height: 68px;
    margin-left: 17px;
    padding: 0 34px 0 8px;
    border-radius: 34px;
    background-color: #352115;
}

.tune {
    flex: none;
    display: flex;
    align-items: center;
    justify-content: center;
    width: 48px;
    height: 48px;
    border-radius: 50%;
    background-color: #4a372b;
}

.url {
    margin-left: 18px;
    font-size: 28px;
    letter-spacing: -0.17px;
    white-space: nowrap;
    color: #e6d9cf;
}

.star {
    margin-left: auto;
}

.tool-ext {
    width: 60px;
    margin-left: 23px;
}

.tool-sep {
    flex: none;
    width: 2px;
    height: 30px;
    margin: 0 23px;
    background-color: #6a5344;
}

.tool-sep-b {
    margin: 0 24px 0 22px;
}

.profile {
    flex: none;
    display: flex;
    align-items: center;
    gap: 13px;
    width: 159px;
    height: 68px;
    margin-left: 15px;
    padding-left: 19px;
    border-radius: 34px;
    background-color: #6b3a17;
}

.avatar {
    display: flex;
    align-items: center;
    justify-content: center;
    width: 40px;
    height: 40px;
    border-radius: 50%;
    background-color: #e9f6ef;
}

.profile-name {
    font-size: 26px;
    letter-spacing: -0.3px;
    color: #f3ddca;
}

.tool-menu {
    margin-left: 14px;
}

/* ---- developer page ---- */
.page {
    flex: 1;
    overflow: hidden;
    padding: 0 271px;
    background-color: #fff;
    color: #333;
    letter-spacing: -0.35px;
}

.crumb {
    display: block;
    height: 44px;
    line-height: 44px;
    font-size: 26px;
    letter-spacing: -0.2px;
    color: #2f6fc6;
    text-decoration: none;
}

.page-head {
    display: flex;
    justify-content: space-between;
    align-items: flex-start;
    height: 120px;
    border-bottom: 2px solid #dcdcdc;
}

.page-head h1 {
    margin: 23px 0 0;
    font-size: 48px;
    line-height: 60px;
    font-weight: 700;
    letter-spacing: -0.45px;
    color: #111;
}

.head-actions {
    display: flex;
    gap: 14px;
    margin-top: 32px;
}

.btn {
    display: block;
    padding: 0;
    border-radius: 7px;
    font-family: inherit;
    font-size: 26px;
    letter-spacing: -0.3px;
    text-align: center;
}

.btn-remove {
    width: 144px;
    height: 60px;
    border: 2px solid #d22f2f;
    background-color: #fff;
    color: #d22f2f;
}

.btn-save {
    width: 140px;
    height: 60px;
    border: none;
    background-color: #cacaca;
    color: #fff;
}

.meta {
    display: grid;
    grid-template-columns: 1040px 1fr;
    padding-top: 32px;
}

.meta-label {
    font-size: 26px;
    line-height: 32px;
    color: #333;
}

.meta-value {
    margin-top: 16px;
    font-size: 26px;
    line-height: 32px;
    color: #444;
}

.meta-next {
    margin-top: 34px;
}

.desc-input {
    display: block;
    width: 910px;
    height: 60px;
    margin-top: 11px;
    padding: 0 16px;
    border: 2px solid #cfcfcf;
    border-radius: 5px;
    font-family: inherit;
    font-size: 28px;
    letter-spacing: 0;
    color: #1a1a1a;
}

.meta-hint {
    margin-top: 16px;
    font-size: 26px;
    line-height: 32px;
    color: #777;
}

.tabs {
    display: flex;
    align-items: flex-start;
    gap: 94px;
    height: 80px;
    margin-top: 73px;
    border-bottom: 2px solid #cdcdcd;
}

.page-tab {
    height: 78px;
    padding-top: 17px;
    font-size: 34px;
    line-height: 44px;
    letter-spacing: -0.3px;
    color: #333;
}

.page-tab-on {
    border-bottom: 4px solid #2f6fc6;
}

.tabs-search {
    margin: 10px 329px 0 auto;
}

.cap-row {
    display: grid;
    grid-template-columns: 183px 950px 463px 1fr;
    align-items: center;
    height: 114px;
    border-bottom: 2px solid #f1f1f1;
}

.cap-head {
    align-items: start;
    height: 109px;
    padding-top: 58px;
    font-size: 26px;
    line-height: 32px;
    color: #666;
}

.cap-check {
    align-self: start;
    width: 26px;
    height: 26px;
    margin: 39px 0 0;
    appearance: none;
    border: 2px solid #767676;
    border-radius: 4px;
    background-color: #fff;
}

.cap-check-off {
    margin-top: 48px;
    border-color: #dcdcdc;
    background-color: #f7f7f7;
}

.cap-name {
    display: flex;
    align-items: center;
    font-size: 31px;
    letter-spacing: -0.25px;
    color: #333;
}

.cap-icon {
    flex: none;
    display: flex;
    align-items: center;
    justify-content: center;
    width: 102px;
    height: 70px;
    margin-right: 8px;
}

.info {
    flex: none;
    width: 28px;
    height: 28px;
    margin-left: 10px;
    border: 2px solid #e0e0e0;
    border-radius: 50%;
    font-size: 17px;
    line-height: 24px;
    text-align: center;
    color: #cfcfcf;
}

.pay-dollar {
    font-size: 30px;
    fill: #cfcfcf;
    stroke: none;
    text-anchor: middle;
    font-family: Inter, sans-serif;
}

.btn-config {
    align-self: start;
    width: 187px;
    height: 50px;
    margin-top: 32px;
    border: none;
    background-color: #cacaca;
    color: #fff;
}

.btn-review {
    align-self: start;
    width: 275px;
    height: 49px;
    margin-top: 42px;
    border: 2px solid #2f6fc6;
    background-color: #fff;
    color: #2f6fc6;
}
```
